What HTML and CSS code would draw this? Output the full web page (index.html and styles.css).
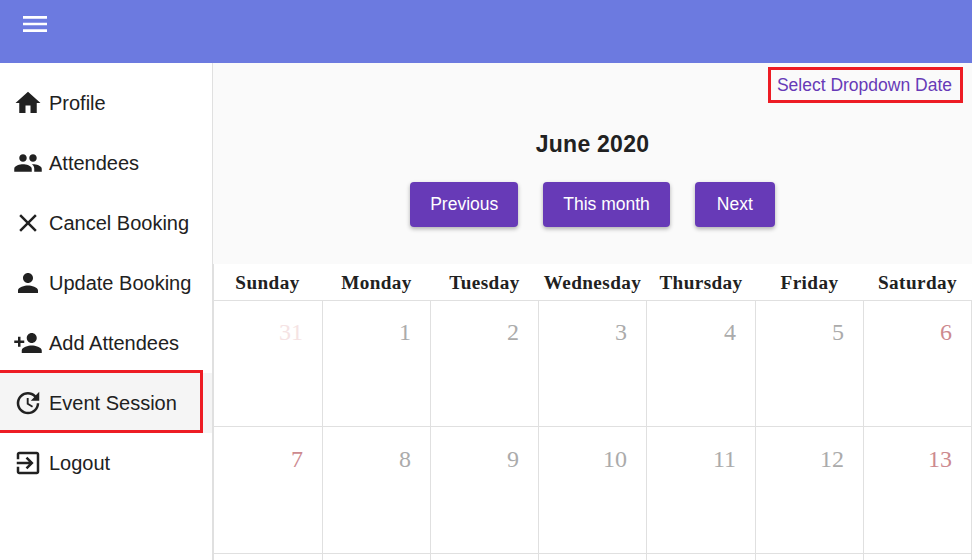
FILE: index.html
```html
<!DOCTYPE html>
<html lang="en">
<head>
<meta charset="utf-8">
<title>Event Session</title>
<link rel="stylesheet" href="styles.css">
</head>
<body>
<header class="topbar">
  <button class="menu-btn" aria-label="Menu"><svg class="menu-icon" viewBox="0 0 24 24"><path d="M3 18h18v-2H3v2zm0-5h18v-2H3v2zm0-7v2h18V6H3z"/></svg></button>
</header>
<div class="layout">
  <nav class="sidebar">
    <a class="nav-item"><svg class="nav-icon" viewBox="0 0 24 24"><path d="M10 20v-6h4v6h5v-8h3L12 3 2 12h3v8z"/></svg><span>Profile</span></a>
    <a class="nav-item"><svg class="nav-icon" viewBox="0 0 24 24"><path d="M16 11c1.66 0 2.99-1.34 2.99-3S17.66 5 16 5c-1.66 0-3 1.34-3 3s1.34 3 3 3zm-8 0c1.66 0 2.99-1.34 2.99-3S9.66 5 8 5C6.34 5 5 6.34 5 8s1.34 3 3 3zm0 2c-2.33 0-7 1.17-7 3.5V19h14v-2.5c0-2.33-4.67-3.5-7-3.5zm8 0c-.29 0-.62.02-.97.05 1.16.84 1.97 1.97 1.97 3.45V19h6v-2.5c0-2.33-4.67-3.5-7-3.5z"/></svg><span>Attendees</span></a>
    <a class="nav-item"><svg class="nav-icon" viewBox="0 0 24 24"><path d="M19 6.41L17.59 5 12 10.59 6.41 5 5 6.41 10.59 12 5 17.59 6.41 19 12 13.41 17.59 19 19 17.59 13.41 12z"/></svg><span>Cancel Booking</span></a>
    <a class="nav-item"><svg class="nav-icon" viewBox="0 0 24 24"><path d="M12 12c2.21 0 4-1.79 4-4s-1.79-4-4-4-4 1.79-4 4 1.79 4 4 4zm0 2c-2.67 0-8 1.34-8 4v2h16v-2c0-2.66-5.33-4-8-4z"/></svg><span>Update Booking</span></a>
    <a class="nav-item"><svg class="nav-icon" viewBox="0 0 24 24"><path d="M15 12c2.21 0 4-1.79 4-4s-1.79-4-4-4-4 1.79-4 4 1.79 4 4 4zm-9-2V7H4v3H1v2h3v3h2v-3h3v-2H6zm9 4c-2.67 0-8 1.34-8 4v2h16v-2c0-2.66-5.33-4-8-4z"/></svg><span>Add Attendees</span></a>
    <a class="nav-item active"><svg class="nav-icon" viewBox="0 0 24 24"><path d="M21 10.12h-6.78l2.74-2.82c-2.73-2.7-7.15-2.8-9.88-.1-2.73 2.71-2.73 7.08 0 9.79s7.15 2.71 9.88 0C18.32 15.65 19 14.08 19 12.1h2c0 1.98-.88 4.55-2.64 6.29-3.51 3.48-9.21 3.48-12.72 0-3.5-3.47-3.53-9.11-.02-12.58s9.14-3.47 12.65 0L21 3v7.12zM12.5 8v4.25l3.5 2.08-.72 1.21L11 13V8h1.5z"/></svg><span>Event Session</span></a>
    <a class="nav-item"><svg class="nav-icon" viewBox="0 0 24 24"><path d="M10.09 15.59L11.5 17l5-5-5-5-1.41 1.41L12.67 11H3v2h9.67l-2.58 2.59zM19 3H5c-1.11 0-2 .9-2 2v4h2V5h14v14H5v-4H3v4c0 1.1.89 2 2 2h14c1.1 0 2-.9 2-2V5c0-1.1-.9-2-2-2z"/></svg><span>Logout</span></a>
  </nav>
  <main class="main">
    <section class="controls">
      <div class="toolbar"><a class="dropdown-link">Select Dropdown Date</a></div>
      <h2 class="month-title">June 2020</h2>
      <div class="btn-group">
        <button class="btn">Previous</button>
        <button class="btn">This month</button>
        <button class="btn">Next</button>
      </div>
    </section>
    <section class="calendar">
      <div class="row head-row">
        <div class="head">Sunday</div><div class="head">Monday</div><div class="head">Tuesday</div><div class="head">Wednesday</div><div class="head">Thursday</div><div class="head">Friday</div><div class="head">Saturday</div>
      </div>
      <div class="row week">
        <div class="day outside">31</div><div class="day">1</div><div class="day">2</div><div class="day">3</div><div class="day">4</div><div class="day">5</div><div class="day weekend">6</div>
      </div>
      <div class="row week">
        <div class="day weekend">7</div><div class="day">8</div><div class="day">9</div><div class="day">10</div><div class="day">11</div><div class="day">12</div><div class="day weekend">13</div>
      </div>
      <div class="row week">
        <div class="day"></div><div class="day"></div><div class="day"></div><div class="day"></div><div class="day"></div><div class="day"></div><div class="day"></div>
      </div>
    </section>
  </main>
</div>
</body>
</html>
```

FILE: styles.css
```css
*, *::before, *::after { box-sizing: border-box; }
html, body { margin: 0; height: 100%; overflow: hidden; }
body { font-family: "Liberation Sans", Arial, sans-serif; color: #212121; background: #fff; }

.topbar { height: 63px; background: #6c7ae0; padding: 8px 0 0 19px; }
.menu-btn { display: block; width: 32px; height: 32px; padding: 0; border: 0; background: none; }
.menu-icon { display: block; width: 32px; height: 32px; fill: #fff; }

.layout { display: flex; height: 497px; }
.sidebar { width: 213px; flex: none; padding-top: 10px; background: #fff; border-right: 1px solid #e0e0e0; }
.nav-item { position: relative; display: flex; align-items: center; height: 60px; padding-left: 13px; font-size: 20px; color: #212121; }
.nav-icon { width: 30px; height: 30px; margin-right: 6px; flex: none; fill: #212121; }
.active { background: #f5f5f5; }
.active::after { content: ""; position: absolute; left: -3px; top: -3px; width: 206px; height: 63px; border: 3px solid #ed1c24; }

.main { flex: 1; min-width: 0; }
.controls { height: 201px; background: #fafafa; }
.toolbar { display: flex; justify-content: flex-end; padding: 4px 9px 0 0; }
.dropdown-link { height: 36px; padding: 0 8px 0 6px; border: 3px solid #ed1c24; font-size: 17.5px; line-height: 30px; color: #673ab7; }
.month-title { margin: 27px 0 0; height: 28px; font-size: 23px; line-height: 28px; font-weight: 700; letter-spacing: .25px; text-align: center; color: #212121; }
.btn-group { display: flex; justify-content: center; gap: 25px; margin-top: 24px; }
.btn { height: 45px; min-width: 80px; padding: 0 20px; border: 0; border-radius: 4px; background: #673ab7; color: #fff; font: 17.5px "Liberation Sans", Arial, sans-serif; box-shadow: 0 2px 4px rgba(0,0,0,.3); }

.calendar { display: grid; grid-template-rows: 37px 126px 127px 1fr; height: 296px; overflow: hidden; font-family: "Liberation Serif", "Times New Roman", serif; border-left: 1px solid #e0e0e0; }
.row { display: grid; grid-template-columns: 109px 108px 108px 108px 109px 108px 108px; border-bottom: 1px solid #e0e0e0; }
.row:last-child { border-bottom: 0; }
.head { padding-right: 1px; font-size: 19.2px; font-weight: 700; text-align: center; line-height: 37px; letter-spacing: .4px; color: #212121; }
.head:first-child { padding-right: 2px; }
.day { border-right: 1px solid #e0e0e0; padding: 17px 19px 0 0; text-align: right; font-size: 24px; line-height: 28px; color: #ababab; }
.week + .week .day { padding-top: 18px; }
.week + .week .day:empty, .day:empty { padding: 0; }
.weekend { color: #cd8a8f; }
.outside { color: #f5e3e4; }
```
